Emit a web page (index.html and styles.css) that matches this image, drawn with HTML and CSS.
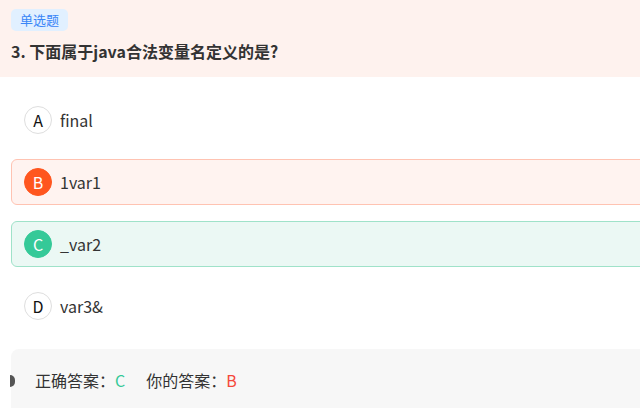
FILE: index.html
```html
<!DOCTYPE html>
<html lang="zh">
<head>
<meta charset="utf-8">
<link rel="stylesheet" href="styles.css">
</head>
<body>
<div class="page">
  <div class="head">
    <span class="tag">单选题</span>
    <div class="title">3. 下面属于java合法变量名定义的是?</div>
  </div>
  <div class="options">
    <div class="opt"><span class="letter">A</span><span class="txt">final</span></div>
    <div class="opt wrong"><span class="letter">B</span><span class="txt">1var1</span></div>
    <div class="opt right"><span class="letter">C</span><span class="txt">_var2</span></div>
    <div class="opt"><span class="letter">D</span><span class="txt">var3&amp;</span></div>
  </div>
  <div class="result">
    <span class="mark"></span>
    <span class="lbl">正确答案：</span><span class="ok">C</span>
    <span class="lbl gap">你的答案：</span><span class="bad">B</span>
  </div>
</div>
</body>
</html>
```
FILE: styles.css
```css
html, body {
  margin: 0;
  padding: 0;
  background: #fff;
  overflow: hidden;
}
body {
  font-family: "Noto Sans CJK SC", "Noto Sans", sans-serif;
  color: #333;
}
.page {
  width: 700px;
}
.head {
  background: #fef2ee;
  height: 77px;
  box-sizing: border-box;
  padding: 6px 11px 0;
}
.tag {
  display: inline-block;
  height: 22px;
  line-height: 22px;
  padding: 0 9px;
  font-size: 13px;
  color: #3a86f7;
  background: #e1f0ff;
  border-radius: 5px;
}
.title {
  margin-top: 8px;
  font-size: 16px;
  font-weight: bold;
  line-height: 24px;
  color: #333;
}
.options {
  display: flex;
  flex-direction: column;
  gap: 16px;
  padding: 20px 0 20px 11px;
}
.opt {
  height: 46px;
  box-sizing: border-box;
  border: 1px solid transparent;
  border-radius: 6px;
  display: flex;
  align-items: center;
  padding-left: 12px;
  gap: 8px;
}
.letter {
  width: 28px;
  height: 28px;
  box-sizing: border-box;
  border: 1px solid #dedede;
  border-radius: 50%;
  display: flex;
  align-items: center;
  justify-content: center;
  font-size: 16px;
  color: #111;
  background: #fff;
}
.txt {
  font-size: 16px;
  color: #333;
}
.wrong {
  background: #fff3f0;
  border-color: #ffc3b2;
}
.wrong .letter {
  background: #ff561f;
  border-color: #ff561f;
  color: #fff;
}
.right {
  background: #ebf8f4;
  border-color: #9fe2c9;
}
.right .letter {
  background: #35c998;
  border-color: #35c998;
  color: #fff;
}
.result {
  position: relative;
  margin-left: 11px;
  height: 70px;
  background: #f7f7f7;
  border-radius: 8px 0 0 0;
  display: flex;
  align-items: center;
  padding-left: 24px;
  font-size: 16px;
  padding-bottom: 8px;
  box-sizing: border-box;
}
.mark {
  position: absolute;
  left: -1px;
  top: 26px;
  width: 5px;
  height: 12px;
  background: #555;
  border-radius: 0 6px 6px 0;
}
.ok {
  color: #35c998;
}
.bad {
  color: #f5483b;
}
.gap {
  margin-left: 21px;
}
```
